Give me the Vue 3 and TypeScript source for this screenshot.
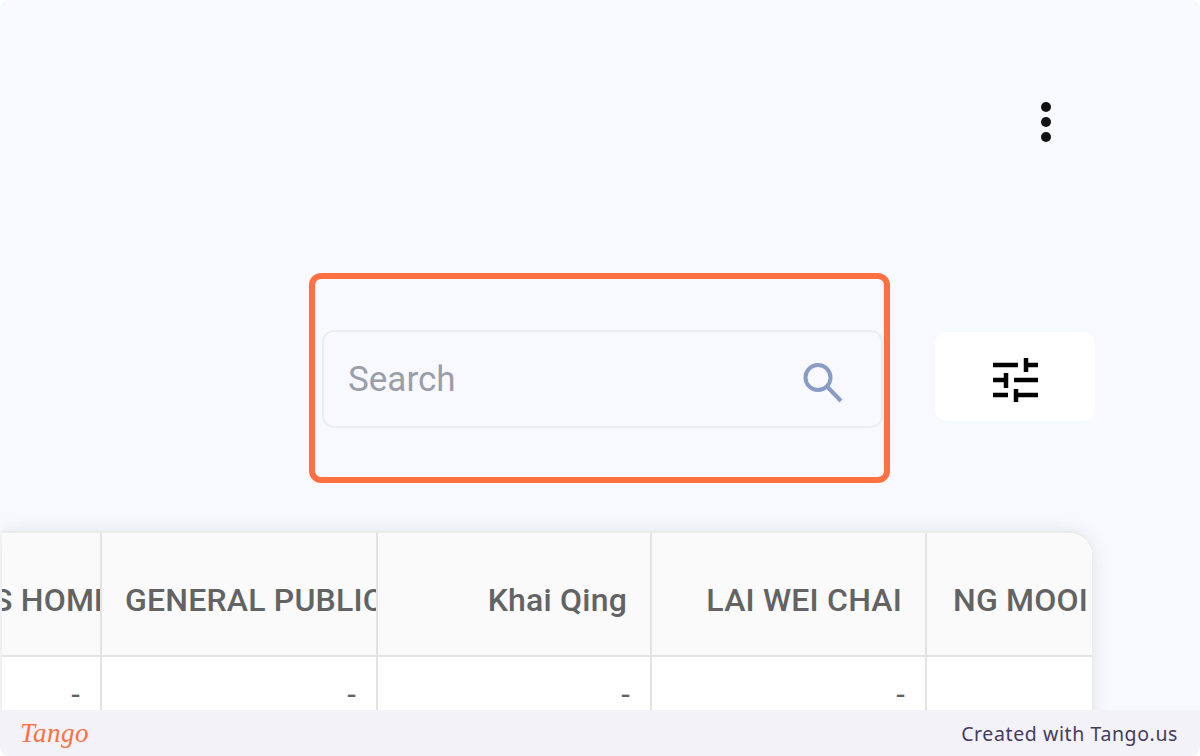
<script setup lang="ts">
const headers = [
  { label: 'S HOMES', width: 100, align: 'left', pad: '0 4px 0 0' },
  { label: 'GENERAL PUBLIC', width: 276, align: 'left', pad: '0 4px 0 23px' },
  { label: 'Khai Qing', width: 274, align: 'right', pad: '0 23px 0 0' },
  { label: 'LAI WEI CHAI', width: 275, align: 'right', pad: '0 23px 0 0' },
  { label: 'NG MOOI', width: 165, align: 'left', pad: '0 3px 0 26px' }
]
const cells = ['-', '-', '-', '-', '']
</script>

<template>
  <div class="frame">
    <main class="page">
      <div class="top-bar">
        <button class="more" type="button" aria-label="More">
          <span></span><span></span><span></span>
        </button>
      </div>

      <div class="tools">
        <div class="search">
          <span class="placeholder">Search</span>
          <svg class="search-icon" width="42" height="42" viewBox="0 0 42 42" fill="none">
            <circle cx="15" cy="15.5" r="12.5" stroke="#8a9cc6" stroke-width="4" />
            <path d="M24.5 25l13.5 14" stroke="#8a9cc6" stroke-width="4" />
          </svg>
        </div>
        <button class="filter" type="button" aria-label="Filter">
          <svg width="46" height="46" viewBox="0 0 46 46" fill="none" stroke="#000" stroke-width="4.5">
            <path d="M0 8h25M33 8h12M33 1v14" />
            <path d="M0 23h14M13 16v15M21 23h24" />
            <path d="M0 38h15M23 32v13M23 38h22" />
          </svg>
        </button>
      </div>

      <div class="table-card">
        <div class="row head">
          <div
            v-for="h in headers"
            :key="h.label"
            class="cell"
            :class="h.align"
            :style="{ width: h.width + 'px', padding: h.pad }"
          >
            <span class="clip">{{ h.label }}</span>
          </div>
        </div>
        <div class="row body">
          <div
            v-for="(c, i) in cells"
            :key="i"
            class="cell"
            :style="{ width: headers[i].width + 'px' }"
          >
            {{ c }}
          </div>
        </div>
      </div>

      <div class="highlight"></div>
    </main>

    <footer class="footer">
      <span class="logo">Tango</span>
      <span class="credit">Created with Tango.us</span>
    </footer>
  </div>
</template>

<style>
html,
body {
  margin: 0;
  background: #fff;
}
</style>

<style scoped>
.frame {
  width: 1200px;
  height: 756px;
  display: flex;
  flex-direction: column;
  overflow: hidden;
  border-radius: 8px;
  font-family: Roboto, "Liberation Sans", sans-serif;
}

.page {
  position: relative;
  flex: 1;
  min-height: 0;
  overflow: hidden;
  background: #f8f9fe;
  padding-top: 100px;
  box-sizing: border-box;
}

.top-bar {
  display: flex;
  justify-content: flex-end;
  padding-right: 149px;
  height: 230px;
}

.more {
  display: flex;
  flex-direction: column;
  gap: 5px;
  padding: 2px 0;
  height: 44px;
  background: none;
  border: none;
}

.more span {
  width: 10px;
  height: 10px;
  border-radius: 50%;
  background: #111;
}

.tools {
  display: flex;
  align-items: flex-start;
  padding-left: 322px;
  gap: 52px;
  height: 201px;
}

.search {
  width: 561px;
  height: 98px;
  box-sizing: border-box;
  border: 2px solid #e9edf6;
  border-radius: 12px;
  display: flex;
  align-items: center;
  justify-content: space-between;
  padding: 0 36px 0 24px;
}

.placeholder {
  font-size: 35px;
  color: #9a9ea9;
}

.search-icon {
  margin-top: 8px;
}

.filter {
  width: 160px;
  height: 89px;
  margin-top: 2px;
  padding: 6px 0 0 2px;
  background: #fff;
  border: none;
  border-radius: 12px;
  display: flex;
  align-items: center;
  justify-content: center;
}

.table-card {
  width: 1091px;
  margin-left: 2px;
  box-sizing: border-box;
  background: #fff;
  border-top: 2px solid #ebebeb;
  border-right: 1px solid #ebebeb;
  border-top-right-radius: 24px;
  overflow: hidden;
  box-shadow: 0 0 18px rgba(40, 45, 80, 0.1);
}

.row {
  display: flex;
}

.head {
  height: 124px;
  background: #fafafa;
  border-bottom: 2px solid #e3e3e3;
  box-sizing: border-box;
}

.body {
  height: 120px;
}

.cell {
  box-sizing: border-box;
  border-right: 2px solid #e3e3e3;
  display: flex;
  align-items: center;
  flex-shrink: 0;
  overflow: hidden;
  font-size: 32px;
  font-weight: 500;
  letter-spacing: 0.2px;
  color: #636363;
  white-space: nowrap;
}

.cell:last-child {
  border-right: none;
}

.head .cell {
  padding-top: 12px !important;
}

.head .cell.left {
  justify-content: flex-start;
}

.head .cell.right {
  justify-content: flex-end;
}

.head .cell:first-child .clip {
  margin-left: -9px;
}

.clip {
  flex-shrink: 0;
  min-width: 0;
}

.body .cell {
  justify-content: flex-end;
  align-items: flex-start;
  padding: 16px 20px 0 0;
  font-weight: 400;
  line-height: 44px;
  font-size: 31px;
}

.highlight {
  position: absolute;
  left: 309px;
  top: 273px;
  width: 581px;
  height: 210px;
  box-sizing: border-box;
  border: 6px solid #ff7142;
  border-radius: 12px;
}

.footer {
  height: 46px;
  flex-shrink: 0;
  display: flex;
  align-items: center;
  justify-content: space-between;
  padding: 0 22px 0 20px;
  background: #f3f2f8;
}

.logo {
  font-family: "Liberation Serif", serif;
  font-style: italic;
  font-size: 27px;
  letter-spacing: 0.5px;
  color: #ff7142;
}

.credit {
  font-family: "Noto Sans", sans-serif;
  font-size: 19.5px;
  letter-spacing: 0.6px;
  color: #463b5c;
}
</style>
